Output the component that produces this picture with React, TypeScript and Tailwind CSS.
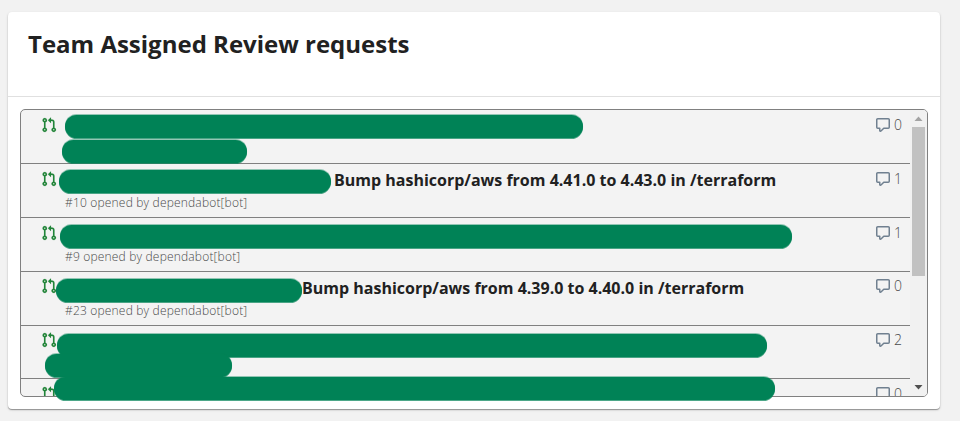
type Row = {
  title: string;
  titleClass: string;
  meta: string;
  comments: number;
  height: string;
  iconTop: string;
};

const rows: Row[] = [
  { title: "", titleClass: "", meta: "", comments: 0, height: "h-[54px]", iconTop: "pt-[7px]" },
  {
    title: "Bump hashicorp/aws from 4.41.0 to 4.43.0 in /terraform",
    titleClass: "pl-[269px]",
    meta: "#10 opened by dependabot[bot]",
    comments: 1,
    height: "h-[54px]",
    iconTop: "pt-[7px]",
  },
  { title: "", titleClass: "", meta: "#9 opened by dependabot[bot]", comments: 1, height: "h-[54px]", iconTop: "pt-[7px]" },
  {
    title: "Bump hashicorp/aws from 4.39.0 to 4.40.0 in /terraform",
    titleClass: "pl-[237px]",
    meta: "#23 opened by dependabot[bot]",
    comments: 0,
    height: "h-[54px]",
    iconTop: "pt-[6px]",
  },
  { title: "", titleClass: "", meta: "", comments: 2, height: "h-[53px]", iconTop: "pt-[6px]" },
  { title: "", titleClass: "", meta: "", comments: 0, height: "h-[54px]", iconTop: "pt-[7px]" },
];

// Rounded bars that hide private titles and authors.
const redactions = [
  "left-[65px] top-[115px] w-[518px]",
  "left-[62px] top-[140px] w-[185px]",
  "left-[59px] top-[170px] w-[272px]",
  "left-[60px] top-[225px] w-[732px]",
  "left-[56px] top-[279px] w-[246px]",
  "left-[57px] top-[334px] w-[710px]",
  "left-[45px] top-[354px] w-[187px]",
  "left-[54px] top-[377px] w-[721px]",
];

function PullRequestIcon() {
  return (
    <svg width="16" height="16" viewBox="0 0 16 16" className="block shrink-0 fill-[#22863a] stroke-[#22863a] stroke-[0.15]">
      <path
        fillRule="evenodd"
        d="M7.177 3.073L9.573.677A.25.25 0 0110 .854v4.792a.25.25 0 01-.427.177L7.177 3.427a.25.25 0 010-.354zM3.75 2.5a.75.75 0 100 1.5.75.75 0 000-1.5zm-2.25.75a2.25 2.25 0 113 2.122v5.256a2.251 2.251 0 11-1.5 0V5.372A2.25 2.25 0 011.5 3.25zM11 2.5h-1V4h1a1 1 0 011 1v5.628a2.251 2.251 0 101.5 0V5A2.5 2.5 0 0011 2.5zm1 10.25a.75.75 0 111.5 0 .75.75 0 01-1.5 0zM3.75 12a.75.75 0 100 1.5.75.75 0 000-1.5z"
      />
    </svg>
  );
}

function CommentIcon() {
  return (
    <svg width="16" height="16" viewBox="0 0 16 16" className="block shrink-0 fill-[#708090]">
      <path
        fillRule="evenodd"
        d="M2.75 2.5a.25.25 0 00-.25.25v7.5c0 .138.112.25.25.25h2a.75.75 0 01.75.75v2.19l2.72-2.72a.75.75 0 01.53-.22h4.5a.25.25 0 00.25-.25v-7.5a.25.25 0 00-.25-.25H2.75zM1 2.75C1 1.784 1.784 1 2.75 1h10.5c.966 0 1.75.784 1.75 1.75v7.5A1.75 1.75 0 0113.25 12H9.06l-2.573 2.573A1.457 1.457 0 014 13.543V12H2.75A1.75 1.75 0 011 10.25v-7.5z"
      />
    </svg>
  );
}

function RequestRow({ row }: { row: Row }) {
  return (
    <li className={`flex shrink-0 border-b border-[#808080] pl-5 pr-2 ${row.height}`}>
      <div className={`w-6 shrink-0 ${row.iconTop}`}>
        <PullRequestIcon />
      </div>
      <div className="min-w-0 flex-1 pt-1 whitespace-nowrap">
        <div className={`h-[25px] text-base leading-6 font-bold text-[#212121] ${row.titleClass}`}>
          {row.title}
        </div>
        <div className="text-xs leading-5 font-light tracking-[0.18px] text-[#4a4a4a]">{row.meta}</div>
      </div>
      <div className={`flex items-start gap-[3px] ${row.iconTop}`}>
        <CommentIcon />
        <span className="-mt-px w-2 text-sm leading-[18px] font-light text-[#4a4a4a]">{row.comments}</span>
      </div>
    </li>
  );
}

function Scrollbar() {
  return (
    <div className="flex w-[17px] shrink-0 flex-col items-center bg-[#f1f1f1]">
      <svg width="17" height="17" viewBox="0 0 17 17" className="block shrink-0 fill-[#a3a3a3]">
        <path d="M4.5 11L8.5 6.5L12.5 11Z" />
      </svg>
      <div className="h-[149px] w-[13px] shrink-0 bg-[#c1c1c1]" />
      <div className="flex-1" />
      <svg width="17" height="17" viewBox="0 0 17 17" className="block shrink-0 fill-[#505050]">
        <path d="M4.5 6L12.5 6L8.5 10.5Z" />
      </svg>
    </div>
  );
}

export default function App() {
  return (
    <div
      className="relative h-[421px] w-[960px] overflow-hidden bg-[#f2f2f2] pt-3 pl-2"
      style={{ fontFamily: '"Open Sans", "Noto Sans", sans-serif' }}
    >
      <section className="flex h-[397px] w-[932px] flex-col rounded-[4px] bg-white shadow-[0_1px_1px_rgba(0,0,0,0.35),0_1px_3px_rgba(0,0,0,0.12)]">
        <header className="h-[85px] shrink-0 border-b border-[#e0e0e0] px-5 pt-4">
          <h1 className="text-2xl leading-8 font-bold text-[#212121]">Team Assigned Review requests</h1>
        </header>
        <div className="flex-1 p-3">
          <div className="flex h-[288px] w-[908px] overflow-hidden rounded-[5px] border border-[#808080] bg-[#f3f3f3]">
            <ul className="flex h-full flex-1 flex-col overflow-hidden">
              {rows.map((row, index) => (
                <RequestRow key={index} row={row} />
              ))}
            </ul>
            <Scrollbar />
          </div>
        </div>
      </section>
      {redactions.map((bar) => (
        <div
          key={bar}
          className={`absolute h-[23px] rounded-full bg-[#008256] shadow-[0_-1px_0_rgba(0,130,86,0.4),0_1px_0_rgba(0,130,86,0.7)] ${bar}`}
        />
      ))}
    </div>
  );
}
